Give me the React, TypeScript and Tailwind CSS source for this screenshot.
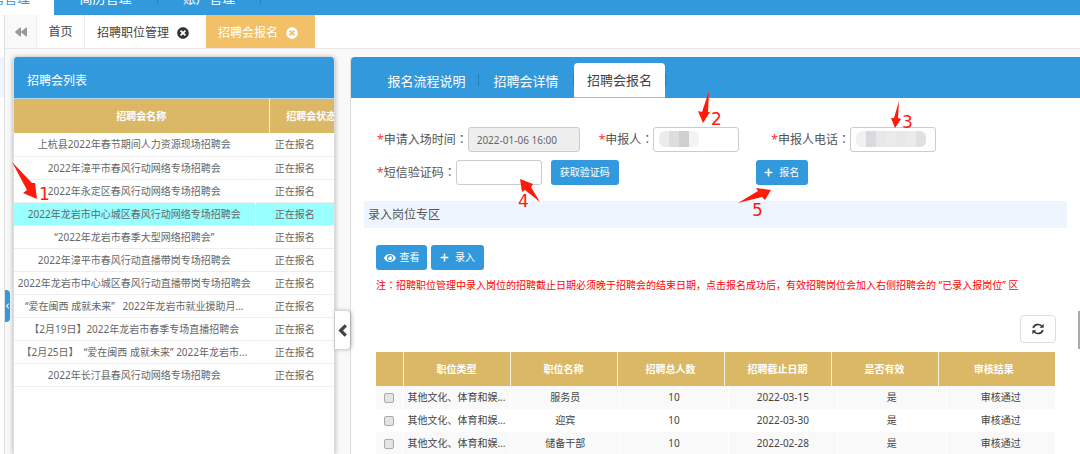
import React from 'react';
import { FaBackward, FaChevronLeft, FaEye, FaPlus, FaTimesCircle } from 'react-icons/fa';

interface Fair {
  name: string;
  status: string;
}

interface Job {
  type: string;
  name: string;
  count: number;
  deadline: string;
  valid: string;
  result: string;
}

const fairs: Fair[] = [
  { name: '上杭县2022年春节期间人力资源现场招聘会', status: '正在报名' },
  { name: '2022年漳平市春风行动网络专场招聘会', status: '正在报名' },
  { name: '2022年永定区春风行动网络专场招聘会', status: '正在报名' },
  { name: '2022年龙岩市中心城区春风行动网络专场招聘会', status: '正在报名' },
  { name: '“2022年龙岩市春季大型网络招聘会”', status: '正在报名' },
  { name: '2022年漳平市春风行动直播带岗专场招聘会', status: '正在报名' },
  { name: '2022年龙岩市中心城区春风行动直播带岗专场招聘会', status: '正在报名' },
  { name: '“爱在闽西 成就未来” \u00a0 2022年龙岩市就业援助月...', status: '正在报名' },
  { name: '【2月19日】2022年龙岩市春季专场直播招聘会', status: '正在报名' },
  { name: '【2月25日】 \u00a0“爱在闽西 成就未来” 2022年龙岩市...', status: '正在报名' },
  { name: '2022年长汀县春风行动网络专场招聘会', status: '正在报名' },
];

const jobs: Job[] = [
  { type: '其他文化、体育和娱...', name: '服务员', count: 10, deadline: '2022-03-15', valid: '是', result: '审核通过' },
  { type: '其他文化、体育和娱...', name: '迎宾', count: 10, deadline: '2022-03-30', valid: '是', result: '审核通过' },
  { type: '其他文化、体育和娱...', name: '储备干部', count: 10, deadline: '2022-02-28', valid: '是', result: '审核通过' },
];

const jobColumns = ['职位类型', '职位名称', '招聘总人数', '招聘截止日期', '是否有效', '审核结果'];

const TopNav: React.FC = () => (
  <nav className="flex h-[15px] items-end overflow-hidden bg-[#3399dd] text-[13px] leading-5 text-white">
    <a href="#recruit" className="flex w-[54px] justify-end bg-white pr-6 pb-[7px] whitespace-nowrap text-[#3399dd]">招聘管理</a>
    <a href="#resume" className="w-[103px] pb-[7px] text-center">简历管理</a>
    <span className="mb-[11px] h-4 w-px bg-[#2480bd]" />
    <a href="#account" className="w-[102px] pb-[7px] text-center">账户管理</a>
    <span className="mb-[11px] h-4 w-px bg-[#2480bd]" />
  </nav>
);

const PageTabs: React.FC = () => (
  <div className="flex h-[34px] border-b border-[#e7e7e7] bg-white text-[12px] text-[#444]">
    <button type="button" aria-label="向左滚动" className="flex w-8 items-center justify-center border-r border-[#eee] bg-[#f9f9f9] text-[#999]">
      <FaBackward size={12} />
    </button>
    <button type="button" className="w-12 border-r border-[#eee]">首页</button>
    <button type="button" className="flex w-[121px] items-center gap-2 pt-0.5 pl-3">
      招聘职位管理
      <FaTimesCircle size={12} className="text-[#333]" />
    </button>
    <button type="button" className="flex w-[109px] items-center gap-2 bg-[#f2c067] pt-0.5 pl-3 text-white">
      招聘会报名
      <FaTimesCircle size={12} />
    </button>
  </div>
);

const FairPanel: React.FC = () => (
  <section className="w-[322px] shrink-0 overflow-hidden rounded-t border-x border-[#ddd] bg-white shadow-[0_0_5px_rgba(0,0,0,0.3)]">
    <h2 className="-mx-px h-[42px] border-b border-[#b5d8f2] bg-[#3399dd] pt-1.5 pl-3.5 text-[12px] leading-9 text-white">招聘会列表</h2>
    <table className="w-[337px] table-fixed text-[10px] text-white">
      <thead>
        <tr className="h-[34px] bg-[#dbb866]">
          <th className="w-[255px] border-r border-white/80">招聘会名称</th>
          <th className="pl-0.5">招聘会状态</th>
        </tr>
      </thead>
    </table>
    <table className="w-full table-fixed text-center text-[10px] text-[#666]">
      <tbody>
        {fairs.map((fair, i) => (
          <tr key={fair.name} className={`h-[23px] border-b border-[#eee] ${i === 3 ? 'bg-[#99ffff]' : ''}`}>
            <td className="w-[241px] border-r border-white/80 pt-px whitespace-nowrap">{fair.name}</td>
            <td className="pt-px">{fair.status}</td>
          </tr>
        ))}
      </tbody>
    </table>
  </section>
);

const DetailTabs: React.FC = () => (
  <div className="flex h-[41px] items-end rounded-tl bg-[#3399dd] pl-6 text-[13px] text-white">
    <button type="button" className="h-9 w-[103px] pt-1">报名流程说明</button>
    <span className="mb-3 h-3 w-px bg-[#2480bd]" />
    <button type="button" className="h-9 w-[94px] pt-1">招聘会详情</button>
    <span className="mb-3 h-3 w-px bg-[#2480bd]" />
    <button type="button" className="h-[35px] w-[91px] rounded-t border-b border-[#f2b04d] bg-white pt-0.5 text-[#444]">招聘会报名</button>
    <span className="mb-3 h-3 w-px bg-[#2480bd]" />
  </div>
);

// The Japanese face centres the full-width colon in its box
const Colon: React.FC = () => <span className="font-['Noto_Sans_CJK_JP',sans-serif] leading-none">：</span>;

const Label: React.FC<{ htmlFor: string; children: React.ReactNode }> = ({ htmlFor, children }) => (
  <label htmlFor={htmlFor} className="text-[12px] leading-4 whitespace-nowrap text-[#555]">
    <span className="text-[#ff3333]">*</span>
    {children}
    <Colon />
  </label>
);

// Covers private values inside a field
const Mosaic: React.FC<{ className: string; shades: string[] }> = ({ className, shades }) => (
  <div className={`pointer-events-none absolute top-1 flex h-4 overflow-hidden rounded-md ${className}`}>
    {shades.map((shade, i) => (
      <span key={i} className="flex-1" style={{ backgroundColor: shade }} />
    ))}
  </div>
);

const fieldClass = 'block h-[25px] rounded-[3px] border border-[#ccc] text-[10px] text-[#666]';
const buttonClass = 'flex h-[25px] items-center justify-center rounded-[3px] bg-[#3399dd] text-[10px] text-white';

const SignupForm: React.FC = () => (
  <form className="flex flex-col gap-2 pt-[29px] pl-[26px]">
    <div className="flex items-center">
      <Label htmlFor="enterTime">申请入场时间</Label>
      <input id="enterTime" readOnly value="2022-01-06 16:00" className={`${fieldClass} w-28 bg-[#eee] pl-2`} />
      <div className="ml-[19px] flex items-center">
        <Label htmlFor="applicant">申报人</Label>
        <div className="relative">
          <input id="applicant" className={`${fieldClass} w-[86px] bg-white`} />
          <Mosaic className="left-1.5 w-10" shades={['#ececec', '#dddddd', '#cfcfcf', '#f3f3f3']} />
        </div>
      </div>
      <div className="ml-8 flex items-center">
        <Label htmlFor="phone">申报人电话</Label>
        <div className="relative">
          <input id="phone" className={`${fieldClass} w-[86px] bg-white`} />
          <Mosaic className="left-1.5 w-[70px]" shades={['#f0f0f0', '#dadade', '#e8e8e8', '#ebebeb', '#e8e8e8', '#ebebeb', '#e0e0e0']} />
        </div>
      </div>
    </div>
    <div className="flex items-center">
      <Label htmlFor="smsCode">短信验证码</Label>
      <input id="smsCode" className={`${fieldClass} w-[86px] bg-white`} />
      <button type="button" className={`${buttonClass} ml-[9px] w-[68px]`}>获取验证码</button>
      <button type="button" className={`${buttonClass} ml-[137px] w-[52px] gap-1.5`}>
        <FaPlus size={9} />
        报名
      </button>
    </div>
  </form>
);

const JobTable: React.FC = () => (
  <div className="mx-[25px] text-[10px]">
    <table className="w-full table-fixed text-white">
      <thead>
        <tr className="h-[34px] bg-[#dbb866]">
          <th className="w-[27px] border-r border-white/80" />
          {jobColumns.map((col, i) => (
            <th key={col} className={i < 5 ? 'w-[107px] border-r border-white/80' : 'pr-1.5'}>{col}</th>
          ))}
        </tr>
      </thead>
    </table>
    <table className="w-full table-fixed text-center text-[#444]">
      <tbody>
        {jobs.map((job, i) => (
          <tr key={job.name} className={`h-[23px] ${i % 2 === 0 ? 'bg-[#f9f9f9]' : 'bg-white'}`}>
            <td className="w-[26px] border-r border-white">
              <input
                type="checkbox"
                aria-label={job.name}
                className="mx-auto block h-2.5 w-2.5 appearance-none rounded-[2px] border border-[#aaa] bg-[#e4e4e4]"
              />
            </td>
            <td className="border-r border-white whitespace-nowrap">{job.type}</td>
            <td className="border-r border-white">{job.name}</td>
            <td className="border-r border-white">{job.count}</td>
            <td className="border-r border-white">{job.deadline}</td>
            <td className="border-r border-white">{job.valid}</td>
            <td>{job.result}</td>
          </tr>
        ))}
      </tbody>
    </table>
  </div>
);

const RefreshIcon: React.FC = () => (
  <svg width="12" height="12" viewBox="0 0 12 12" fill="none" stroke="currentColor" strokeWidth="1.6">
    <path d="M1.2 5 A4.8 4.3 0 0 1 9.6 3" />
    <path d="M10.8 7 A4.8 4.3 0 0 1 2.4 9" />
    <path d="M11.6 0.8 V4.8 H7.6 Z" fill="currentColor" stroke="none" />
    <path d="M0.4 11.2 V7.2 H4.4 Z" fill="currentColor" stroke="none" />
  </svg>
);

const Annotations: React.FC = () => (
  <svg
    className="pointer-events-none absolute top-0 left-0 font-['DejaVu_Sans',sans-serif] text-[17px]"
    width="1080"
    height="454"
    fill="#ff1a0a"
  >
    <path d="M12 162 L32 183 L35 183 L37 199 L23 193 L27 190 Z" />
    <path d="M709 91 L708 112 L710 112 L703 123 L698 111 L702 112 Z" />
    <path d="M899 101 L898 118 L901 119 L895 128 L891 118 L894 118 Z" />
    <path d="M520 179 L533 184 L531 187 L540 202 L525 190 L522 192 Z" />
    <path d="M738 203 L758 191 L756 188 L771 190 L765 200 L762 197 Z" />
    <text x="39" y="200">1</text>
    <text x="711" y="125">2</text>
    <text x="902" y="128">3</text>
    <text x="518" y="207">4</text>
    <text x="752" y="216">5</text>
  </svg>
);

const App: React.FC = () => {
  return (
    <div className="relative flex h-screen flex-col overflow-hidden bg-white font-['Noto_Sans','Noto_Sans_CJK_SC',sans-serif]">
      <TopNav />
      <div className="flex min-h-0 flex-1">
        <aside className="w-[5px] shrink-0 border-r border-[#ddd] pt-[42px]">
          <div className="h-10 bg-[#eef5ff]" />
        </aside>
        <main className="relative flex min-w-0 flex-1 flex-col bg-[#f9f9f9]">
          <PageTabs />
          <div className="flex min-h-0 flex-1 pt-2 pl-2">
            <FairPanel />
            <section className="relative ml-[15px] min-w-0 flex-1 rounded-tl border-l border-[#ddd] bg-white">
              <DetailTabs />
              <SignupForm />
              <h3 className="mt-4 mr-[13px] ml-[13px] h-[27px] bg-[#eef5ff] pl-1 text-[12px] leading-[27px] text-[#555]">录入岗位专区</h3>
              <div className="mt-[17px] ml-[25px] flex gap-1">
                <button type="button" className={`${buttonClass} w-[51px] gap-1`}>
                  <FaEye size={12} />
                  查看
                </button>
                <button type="button" className={`${buttonClass} w-[53px] gap-1.5`}>
                  <FaPlus size={9} />
                  录入
                </button>
              </div>
              <p className="mt-[7px] ml-[25px] h-4 text-[10px] leading-4 whitespace-nowrap text-[#ff0000]">
                注<Colon />招聘职位管理中录入岗位的招聘截止日期必须晚于招聘会的结束日期，点击报名成功后，有效招聘岗位会加入右侧招聘会的 “已录入报岗位” 区
              </p>
              <div className="mt-[22px] mr-6 mb-[9px] flex justify-end">
                <button type="button" aria-label="刷新" className="flex h-7 w-9 items-center justify-center rounded border border-[#ddd] bg-white text-[#333]">
                  <RefreshIcon />
                </button>
              </div>
              <JobTable />
              <button
                type="button"
                aria-label="收起列表"
                className="absolute top-[254px] -left-4 flex h-[38px] w-[15px] items-center justify-center rounded-r bg-white text-[#444] shadow-[1px_0_4px_rgba(0,0,0,0.35)]"
              >
                <svg width="9" height="13" viewBox="0 0 9 13" fill="none" stroke="currentColor" strokeWidth="3.2">
                  <path d="M7.8 1.3 L2.6 6.5 L7.8 11.7" />
                </svg>
              </button>
            </section>
          </div>
          <button
            type="button"
            aria-label="展开菜单"
            className="absolute top-[275px] left-0 flex h-8 w-[5px] items-center justify-center rounded-r bg-[#3399dd] text-white"
          >
            <FaChevronLeft size={6} />
          </button>
          <div className="absolute top-[296px] right-0 h-[38px] w-0.5 bg-[#aaa]" />
        </main>
      </div>
      <Annotations />
    </div>
  );
};

export default App;
